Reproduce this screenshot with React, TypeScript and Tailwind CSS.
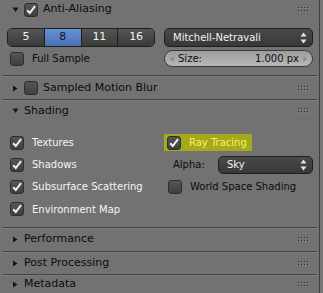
const Grip = () => (
	<svg width="11" height="5" viewBox="0 0 11 5" className="ml-auto mr-[10px]">
		{[0, 3, 6, 9].map((x) =>
			[0, 3].map((y) => (
				<g key={`${x}-${y}`}>
					<rect x={x + 1} y={y + 1} width="1" height="1" fill="#8a8a8a" />
					<rect x={x} y={y} width="1" height="1" fill="#2a2a2a" />
				</g>
			))
		)}
	</svg>
);

const Arrow = ({ open }: { open: boolean }) =>
	open ? (
		<svg width="7" height="7" viewBox="0 0 7 7">
			<polygon points="0.5,1.5 6.5,1.5 3.5,6" fill="#161616" />
		</svg>
	) : (
		<svg width="7" height="7" viewBox="0 0 7 7">
			<polygon points="1,0.5 5.5,3.5 1,6.5" fill="#161616" />
		</svg>
	);

const Check = ({ on }: { on: boolean }) => (
	<div className="flex h-[14px] w-[14px] shrink-0 items-center justify-center rounded-[3px] border border-[#2e2e2e] bg-gradient-to-b from-[#565656] to-[#3f3f3f]">
		{on && (
			<svg width="12" height="12" viewBox="0 0 12 12">
				<path d="M2.2 6.2 L4.8 9 L10 2.2" fill="none" stroke="#f0f0f0" strokeWidth="2" />
			</svg>
		)}
	</div>
);

const Header = ({ label, open, check, height }: { label: string; open: boolean; check?: boolean; height: string }) => (
	<div className={`flex items-center pl-[12px] ${height}`}>
		<Arrow open={open} />
		{check !== undefined && (
			<div className="ml-[5px]">
				<Check on={check} />
			</div>
		)}
		<span className="ml-[5px] text-[11px] text-[#0c0c0c]">{label}</span>
		<Grip />
	</div>
);

const Sep = ({ mt }: { mt: string }) => (
	<div className={`mx-[3px] w-[314px] ${mt}`}>
		<div className="h-px bg-[#444444]" />
		<div className="h-px bg-[#7c7c7c]" />
	</div>
);

const Option = ({ label, on }: { label: string; on: boolean }) => (
	<div className="flex items-center pl-[3px]">
		<Check on={on} />
		<span className={`ml-[8px] text-[10px] ${on ? "text-[#f4f4f4]" : "text-[#0c0c0c]"}`}>{label}</span>
	</div>
);

const UpDown = () => (
	<svg width="7" height="12" viewBox="0 0 7 12" className="ml-auto">
		<polygon points="3.5,0.5 6.5,4.5 0.5,4.5" fill="#e6e6e6" />
		<polygon points="0.5,7.5 6.5,7.5 3.5,11.5" fill="#e6e6e6" />
	</svg>
);

export default function App() {
	const samples = ["5", "8", "11", "16"];
	return (
		<div
			className="flex h-[293px] w-[323px] overflow-hidden bg-[#727272]"
			style={{ fontFamily: '"DejaVu Sans", sans-serif' }}
		>
			<div className="flex w-[319px] shrink-0 flex-col pt-[1px]">
				<Header label="Anti-Aliasing" open check={true} height="h-[19px]" />

				<div className="mt-[10px] grid h-[19px] grid-cols-[148px_149px] gap-x-[9px] pl-[7px]">
					<div className="flex overflow-hidden rounded-[5px] border border-[#1e1e1e]">
						{samples.map((s, i) => (
							<div
								key={s}
								className={`flex flex-1 items-center justify-center text-[11px] ${i > 0 ? "border-l border-[#1e1e1e]" : ""} ${
									s === "8"
										? "bg-gradient-to-b from-[#6591d6] to-[#4b73b3] text-[#0e1626]"
										: "bg-gradient-to-b from-[#555555] to-[#3a3a3a] text-[#f2f2f2]"
								}`}
							>
								{s}
							</div>
						))}
					</div>
					<div className="flex items-center rounded-[5px] border border-[#1e1e1e] bg-gradient-to-b from-[#4a4a4a] to-[#383838] pl-[8px] pr-[5px] text-[10px] text-[#f2f2f2]">
						Mitchell-Netravali
						<UpDown />
					</div>
				</div>

				<div className="mt-[3px] grid h-[19px] grid-cols-[148px_149px] gap-x-[9px] pl-[7px]">
					<Option label="Full Sample" on={false} />
					<div className="flex items-center rounded-full border border-[#3a3a3a] bg-gradient-to-b from-[#9c9c9c] to-[#b8b8b8] px-[5px] text-[10px] text-[#0c0c0c]">
						<svg width="4" height="6" viewBox="0 0 4 6">
							<polygon points="3.5,0 3.5,6 0,3" fill="#8a8a8a" />
						</svg>
						<span className="ml-[4px]">Size:</span>
						<span className="ml-auto mr-[4px]">1.000 px</span>
						<svg width="4" height="6" viewBox="0 0 4 6">
							<polygon points="0.5,0 0.5,6 4,3" fill="#8a8a8a" />
						</svg>
					</div>
				</div>

				<Sep mt="mt-[8px]" />
				<Header label="Sampled Motion Blur" open={false} check={false} height="h-[24px]" />
				<Sep mt="mt-0" />
				<Header label="Shading" open height="h-[21px]" />

				<div className="mt-[11px] grid grid-cols-[148px_149px] gap-x-[9px] pl-[7px]">
					<div className="flex h-[22px] items-center">
						<Option label="Textures" on />
					</div>
					<div className="flex h-[22px] items-center">
						<div className="flex h-[17px] w-[88px] items-center bg-[#a6a81f] pl-[3px]">
							<Check on />
							<span className="ml-[8px] text-[10px] text-[#f6f65a]">Ray Tracing</span>
						</div>
					</div>

					<div className="flex h-[22px] items-center">
						<Option label="Shadows" on />
					</div>
					<div className="flex h-[22px] items-center">
						<span className="ml-[9px] text-[10px] text-[#0c0c0c]">Alpha:</span>
						<div className="ml-auto flex h-[18px] w-[95px] items-center rounded-[5px] border border-[#1e1e1e] bg-gradient-to-b from-[#4a4a4a] to-[#383838] pl-[8px] pr-[5px] text-[10px] text-[#f2f2f2]">
							Sky
							<UpDown />
						</div>
					</div>

					<div className="flex h-[22px] items-center">
						<Option label="Subsurface Scattering" on />
					</div>
					<div className="flex h-[22px] items-center pl-[1px]">
						<Option label="World Space Shading" on={false} />
					</div>

					<div className="flex h-[23px] items-center">
						<Option label="Environment Map" on />
					</div>
				</div>

				<Sep mt="mt-[6px]" />
				<Header label="Performance" open={false} height="h-[24px]" />
				<Sep mt="mt-0" />
				<Header label="Post Processing" open={false} height="h-[23px]" />
				<Sep mt="mt-0" />
				<Header label="Metadata" open={false} height="h-[19px]" />
			</div>
			<div className="w-px bg-[#3e3e3e]" />
			<div className="flex-1 bg-[#767676]" />
		</div>
	);
}
